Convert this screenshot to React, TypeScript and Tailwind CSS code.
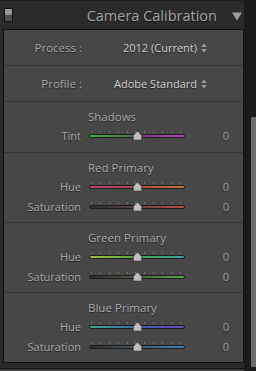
import React from "react";

const shadow = "[text-shadow:0_1px_1px_rgba(0,0,0,0.55)]";

function Updown() {
  return (
    <svg width="6" height="10" viewBox="0 0 6 10" className="ml-[4px] mt-[1px]">
      <path d="M3 0.5 L5.8 4 L0.2 4 Z" fill="#9c9c9c" />
      <path d="M3 9.5 L5.8 6 L0.2 6 Z" fill="#9c9c9c" />
    </svg>
  );
}

function Slider({ label, grad }: { label: string; grad: string }) {
  const ticks = Array.from({ length: 11 });
  return (
    <div className="flex h-[20px] items-center">
      <div className={`w-[77px] text-right text-[11px] leading-[14px] text-[#ababab] ${shadow}`}>{label}</div>
      <div className="relative ml-[8px] h-[20px] w-[96px]">
        <div className="absolute left-[2px] right-[4px] top-[5px] flex justify-between">
          {ticks.map((_, i) => (
            <div key={i} className="h-[2px] w-[1px] bg-[#727272]" />
          ))}
        </div>
        <div className={`absolute left-0 right-0 top-[8px] h-[4px] rounded-full border border-[#1e1e1e] ${grad}`} />
        <svg width="11" height="11" viewBox="0 0 11 11" className="absolute left-[43px] top-[4px]">
          <path d="M5.5 0.8 L9.8 5.5 L9.8 10.2 L1.2 10.2 L1.2 5.5 Z" fill="#bebebe" stroke="#2a2a2a" strokeWidth="0.8" />
        </svg>
      </div>
      <div className={`w-[44px] text-right text-[11px] leading-[14px] text-[#9fa3a8] ${shadow}`}>0</div>
    </div>
  );
}

function Section({ title, rows, last }: { title: string; rows: { label: string; grad: string }[]; last?: boolean }) {
  return (
    <div className={`flex flex-col pt-[7px] ${rows.length === 1 ? "h-[51px]" : last ? "h-[69px]" : "h-[70px]"} ${last ? "" : "border-b border-[#363636]"}`}>
      <div className={`h-[17px] pl-[84px] text-[11.5px] leading-[16px] text-[#ababab] ${shadow}`}>{title}</div>
      {rows.map((r) => (
        <Slider key={r.label} label={r.label} grad={r.grad} />
      ))}
    </div>
  );
}

export default function App() {
  return (
    <div className="flex h-[371px] w-[256px] overflow-hidden bg-[#2b2b2b] font-['Open_Sans',sans-serif]">
      <div className="flex w-[244px] flex-col">
        <div className="flex h-[29px] items-center border-t border-[#1f1f1f] pl-[4px] pr-[2px]">
          <div className="h-[14px] w-[9px] border border-[#111] bg-[linear-gradient(to_bottom,#9a9a9a_0%,#9a9a9a_45%,#4e4e4e_50%,#4e4e4e_100%)]" />
          <div className="flex-1" />
          <div className={`mt-[2px] text-[14.5px] leading-[20px] text-[#a3a6a9] ${shadow}`}>Camera Calibration</div>
          <svg width="10" height="9" viewBox="0 0 10 9" className="ml-[15px] mt-[3px]">
            <path d="M0 0.5 L10 0.5 L5 8.5 Z" fill="#9e9e9e" />
          </svg>
        </div>
        <div className="ml-[3px] flex w-[241px] flex-col border border-[#111] bg-[#474747]">
          <div className="flex h-[36px] items-center border-b border-[#363636]">
            <div className={`w-[78px] text-right text-[11.5px] leading-[14px] text-[#a9a9a9] ${shadow}`}>Process :</div>
            <div className="flex flex-1 items-center justify-end pr-[36px]">
              <span className={`text-[11px] leading-[14px] text-[#d2d2d2] ${shadow}`}>2012 (Current)</span>
              <Updown />
            </div>
          </div>
          <div className="flex h-[36px] items-center border-b border-[#363636]">
            <div className={`w-[78px] text-right text-[11.5px] leading-[14px] text-[#a9a9a9] ${shadow}`}>Profile :</div>
            <div className="flex flex-1 items-center justify-end pr-[36px]">
              <span className={`text-[11px] leading-[14px] text-[#d2d2d2] ${shadow}`}>Adobe Standard</span>
              <Updown />
            </div>
          </div>
          <Section
            title="Shadows"
            rows={[{ label: "Tint", grad: "bg-[linear-gradient(to_right,#4aa84a,#4a6a4a_50%,#7a3a7a_52%,#b444b4)]" }]}
          />
          <Section
            title="Red Primary"
            rows={[
              { label: "Hue", grad: "bg-[linear-gradient(to_right,#b8407e,#b44646_50%,#bc7c3c)]" },
              { label: "Saturation", grad: "bg-[linear-gradient(to_right,#2e2e2e,#5a4444_50%,#c44a4a)]" },
            ]}
          />
          <Section
            title="Green Primary"
            rows={[
              { label: "Hue", grad: "bg-[linear-gradient(to_right,#aab83c,#4ca64c_50%,#38a4a4)]" },
              { label: "Saturation", grad: "bg-[linear-gradient(to_right,#2e2e2e,#4a5e46_50%,#5aa84a)]" },
            ]}
          />
          <Section
            last
            title="Blue Primary"
            rows={[
              { label: "Hue", grad: "bg-[linear-gradient(to_right,#40aa8a,#4064b4_50%,#7048c4)]" },
              { label: "Saturation", grad: "bg-[linear-gradient(to_right,#2e2e2e,#44586a_50%,#4480b8)]" },
            ]}
          />
        </div>
        <div className="h-[5px]" />
        <div className="flex-1 border-t border-[#111] bg-[#3c3c3c]" />
      </div>
      <div className="flex w-[12px] justify-end bg-[#1a1a1a] pt-[117px]">
        <div className="h-[250px] w-[5px] bg-[#6c6c6c]" />
      </div>
    </div>
  );
}
